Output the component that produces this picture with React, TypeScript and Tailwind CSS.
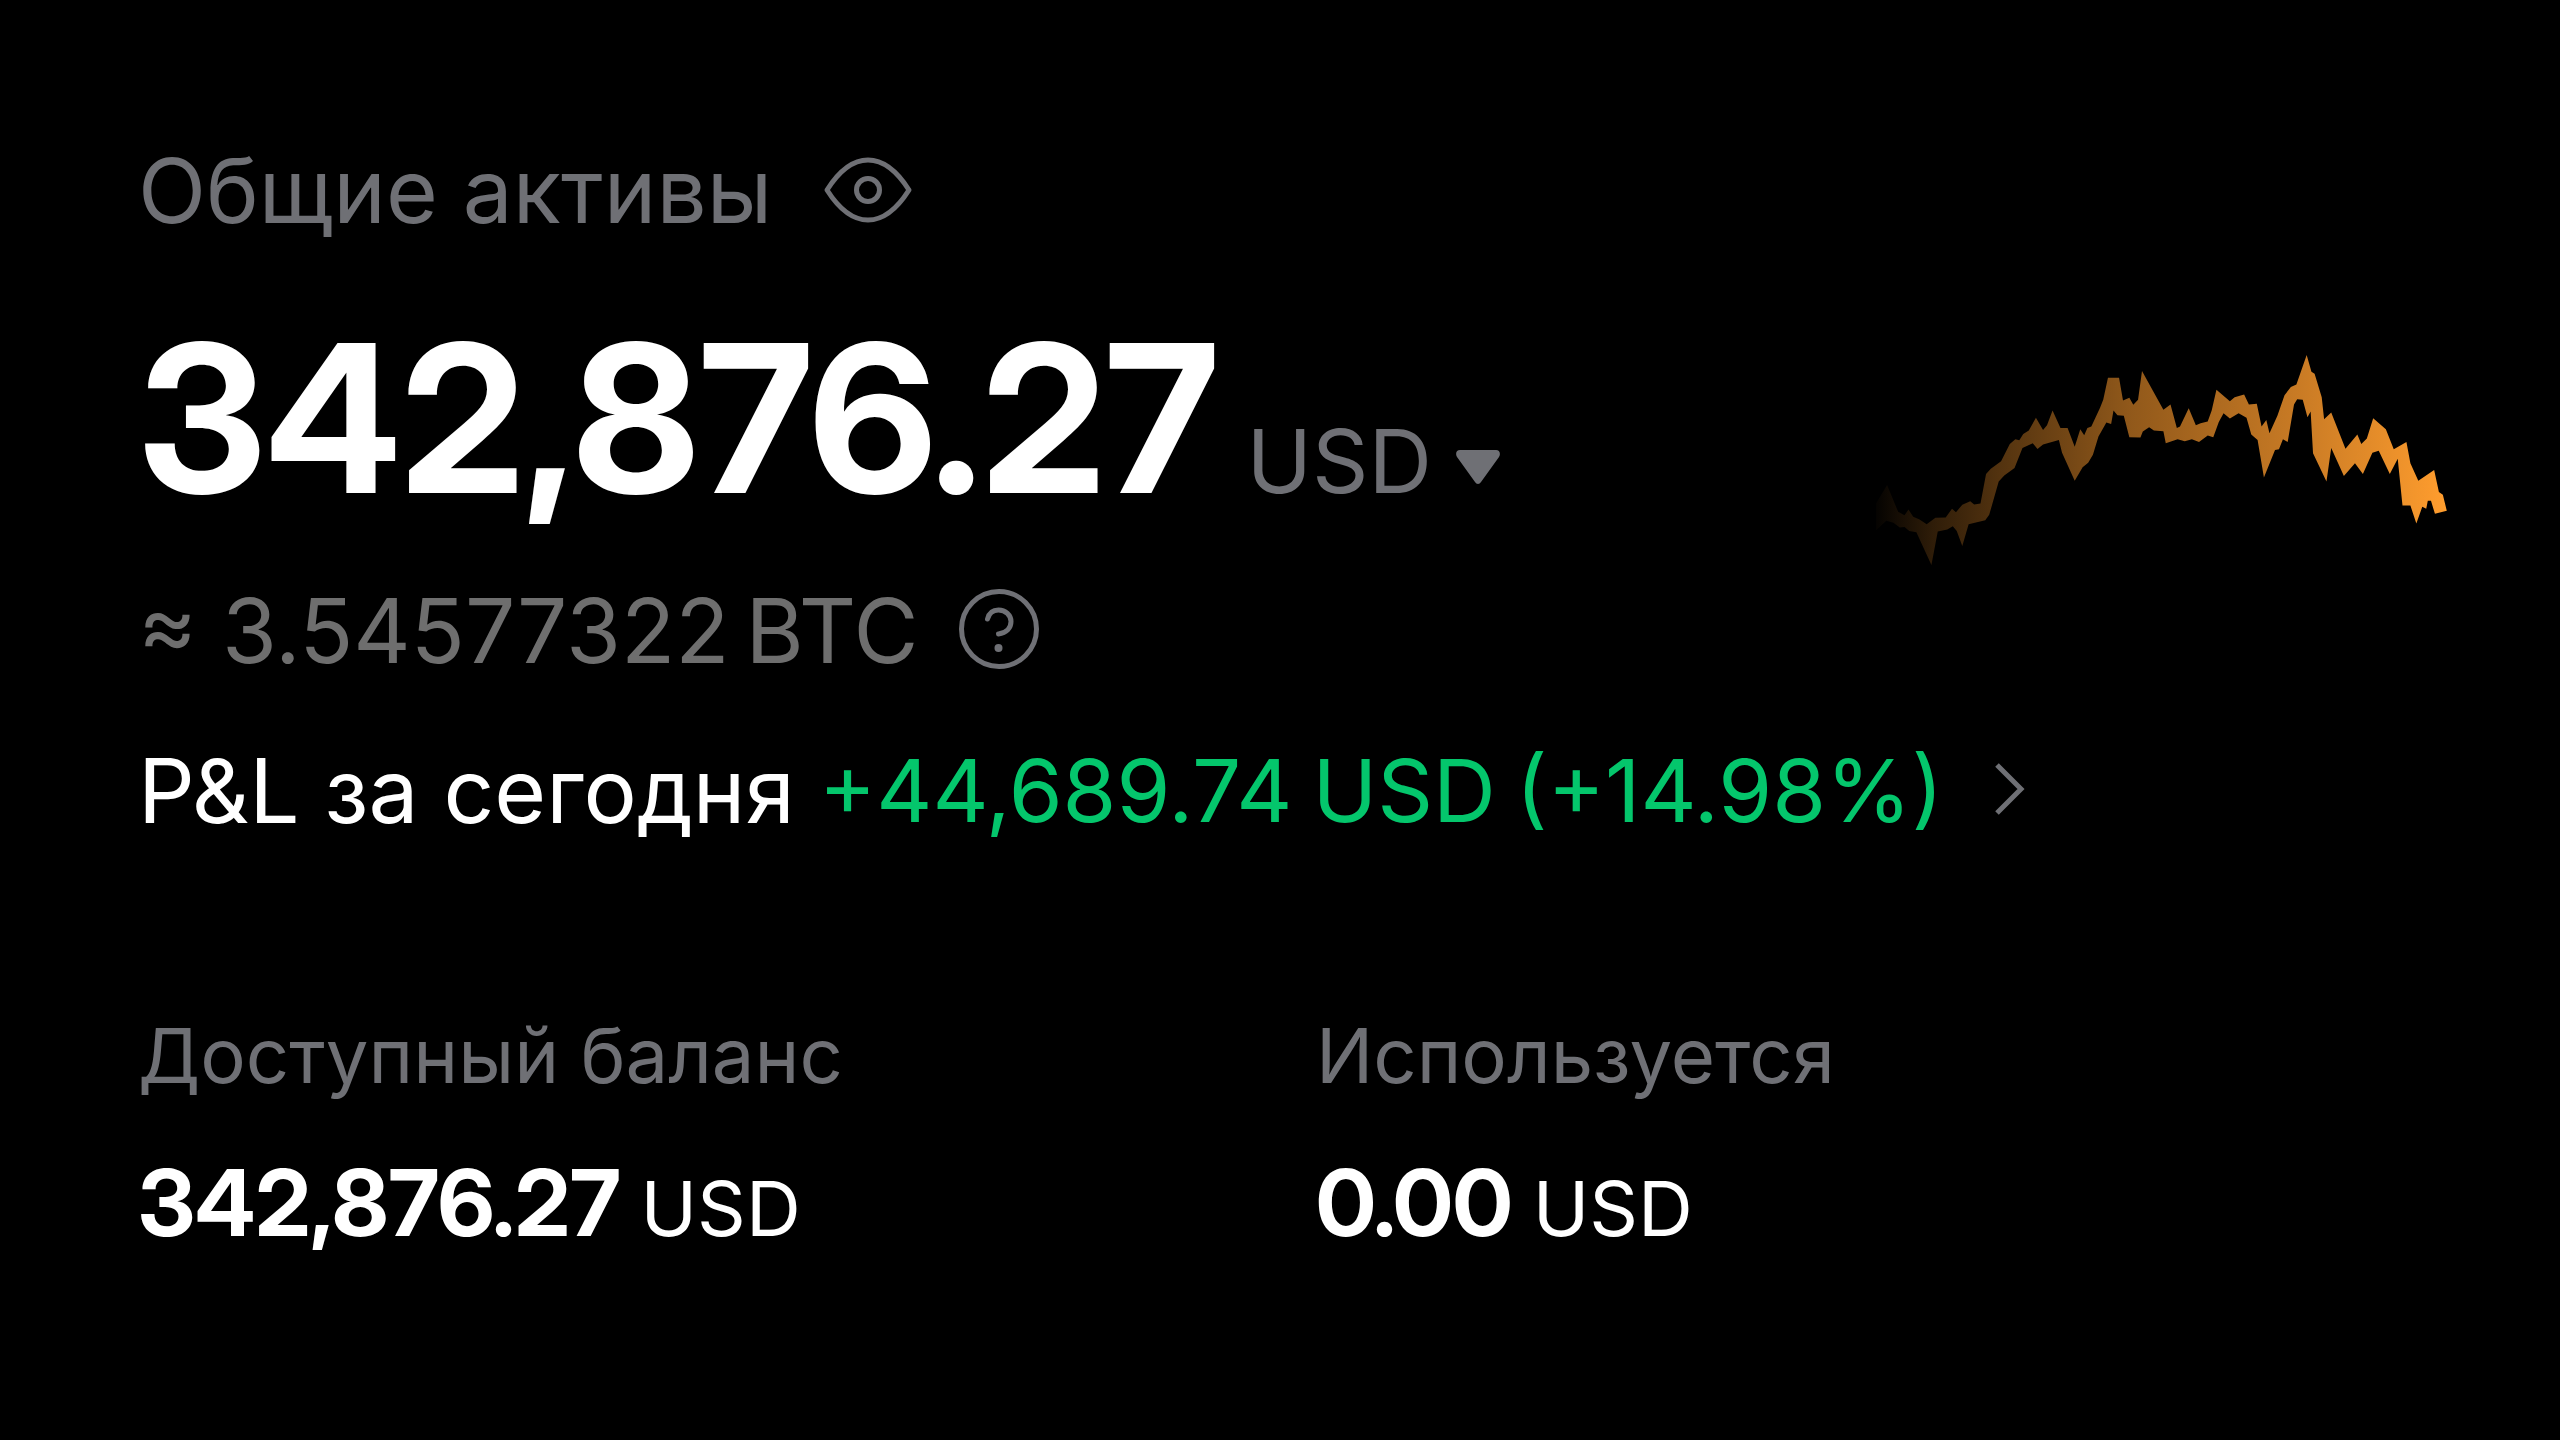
import React from 'react';

const EyeIcon = ({ className }: { className?: string }) => (
    <svg viewBox="0 0 88 66" fill="none" stroke="currentColor" strokeWidth="5" strokeLinejoin="round" className={className} aria-hidden="true">
        <path d="M3 33 C16 12.500 30 3 44 3 C58 3 72 12.500 85 33 C72 53.500 58 63 44 63 C30 63 16 53.500 3 33 Z" />
        <circle cx="44" cy="33" r="11.5" />
    </svg>
);

const HelpIcon = ({ className }: { className?: string }) => (
    <svg viewBox="0 0 80 80" fill="none" stroke="currentColor" strokeWidth="5" strokeLinecap="round" className={className} aria-hidden="true">
        <circle cx="40" cy="40" r="37.5" />
        <path d="M28.500 30 C30 24 34 21 39.500 21 C46.500 21 52 26 52 32.500 C52 39 47.500 44 39.500 45" />
        <circle cx="39.500" cy="59" r="4" fill="currentColor" stroke="none" />
    </svg>
);

const CaretIcon = ({ className }: { className?: string }) => (
    <svg viewBox="0 0 44 34" fill="currentColor" className={className} aria-hidden="true">
        <path d="M4 0 H40 C43.500 0 45 3.500 43 7 L25 32 C23.500 34.500 20.500 34.500 19 32 L1 7 C-1 3.500 0.500 0 4 0 Z" />
    </svg>
);

const ChevronIcon = ({ className }: { className?: string }) => (
    <svg viewBox="0 0 30 52" fill="none" stroke="currentColor" strokeWidth="5" className={className} aria-hidden="true">
        <path d="M2 2 L26 26 L2 50" />
    </svg>
);

const Sparkline = ({ className }: { className?: string }) => (
    <svg viewBox="40 40 1445 640" preserveAspectRatio="none" className={className} role="img" aria-label="График активов">
        <defs>
            <linearGradient id="spark" gradientUnits="userSpaceOnUse" x1="40" y1="0" x2="1480" y2="0">
                <stop offset="0" stopColor="#f7972d" stopOpacity="0.02" />
                <stop offset="0.1" stopColor="#f7972d" stopOpacity="0.19" />
                <stop offset="0.22" stopColor="#f7972d" stopOpacity="0.34" />
                <stop offset="0.45" stopColor="#f7972d" stopOpacity="0.59" />
                <stop offset="0.75" stopColor="#f7972d" stopOpacity="0.82" />
                <stop offset="1" stopColor="#ff9d2e" />
            </linearGradient>
        </defs>
        <path
            fill="url(#spark)"
            d="M40 490 L68 435 L96 515 L112 525 L122 508 L134 530 L150 538 L168 552 L190 533 L216 532 L232 506 L242 516 L258 494 L278 483 L288 493 L304 490 L318 402 L330 386 L356 364 L378 312 L392 298 L402 301 L412 282 L426 272 L444 234 L462 270 L472 256 L486 212 L506 264 L524 264 L542 320 L556 268 L566 286 L574 264 L584 260 L606 204 L614 180 L626 114 L654 114 L664 182 L680 174 L690 195 L702 180 L712 94 L766 210 L784 194 L800 264 L808 260 L830 205 L848 256 L860 250 L878 245 L888 212 L900 150 L934 184 L946 172 L970 164 L982 194 L1002 192 L1014 260 L1026 240 L1034 280 L1054 228 L1072 166 L1088 142 L1102 134 L1128 46 L1140 96 L1148 102 L1166 172 L1172 238 L1190 218 L1226 326 L1256 284 L1266 312 L1280 296 L1296 235 L1328 268 L1348 328 L1380 306 L1390 370 L1410 422 L1450 390 L1462 456 L1472 464 L1482 512 L1452 521 L1442 482 L1434 482 L1430 506 L1420 500 L1405 550 L1390 496 L1370 496 L1358 356 L1338 402 L1310 332 L1294 338 L1270 402 L1250 370 L1222 408 L1190 324 L1178 424 L1144 340 L1138 215 L1130 232 L1118 180 L1104 178 L1096 194 L1080 306 L1068 298 L1058 328 L1048 330 L1020 412 L1004 300 L988 284 L976 234 L956 220 L934 236 L918 220 L906 246 L892 292 L878 287 L856 306 L838 298 L820 304 L802 298 L772 310 L766 274 L742 272 L730 262 L714 275 L708 293 L680 292 L666 228 L650 226 L640 212 L634 252 L622 248 L602 290 L588 344 L576 368 L562 382 L542 422 L510 338 L502 300 L462 314 L448 327 L436 310 L410 324 L390 384 L364 406 L350 424 L326 524 L316 540 L274 552 L258 617 L244 572 L234 558 L220 568 L196 574 L180 674 L142 576 L124 572 L112 560 L100 562 L84 548 L66 542 L40 570 Z"
        />
    </svg>
);

const balances = [
    { label: 'Доступный баланс', value: '342,876.27' },
    { label: 'Используется', value: '0.00' },
];

const App = () => {
    return (
        <main className="min-h-screen bg-black pt-[139px] pl-[138px] pr-[112px] pb-36 font-['Inter',sans-serif] text-white">
            <section className="flex items-end justify-between">
                <div>
                    <div className="flex items-center gap-[52px] text-[#6f7075]">
                        <h1 className="text-[89px] leading-[104px]">Общие активы</h1>
                        <button type="button" aria-label="Скрыть баланс" className="mb-0.5">
                            <EyeIcon className="w-[88px] h-[66px]" />
                        </button>
                    </div>

                    <div className="mt-[71px] flex items-baseline gap-7">
                        <span className="text-[206px] leading-[208px] font-bold font-['Inter_Display','Inter',sans-serif]">342,876.27</span>
                        <button type="button" className="flex items-center gap-6 text-[88px] leading-[104px] text-[#6f7075]">
                            USD
                            <CaretIcon className="w-[44px] h-[34px] mt-3" />
                        </button>
                    </div>

                    <div className="mt-[57px] flex items-center text-[89px] leading-[104px] text-[#6e6e6e]">
                        <span>≈ 3.54577322</span>
                        <span className="ml-4">BTC</span>
                        <button type="button" aria-label="Подробнее" className="ml-10 mb-1 text-[#6f7075]">
                            <HelpIcon className="w-20 h-20" />
                        </button>
                    </div>
                </div>

                <Sparkline className="w-[572px] h-[214px] mb-[116px] shrink-0" />
            </section>

            {/* Today's result */}
            <a href="#" className="mt-14 flex items-center leading-[104px]">
                <span className="text-[89px]">P&amp;L за сегодня</span>
                <span className="ml-6 flex gap-5 text-[87px] text-[#04c66c]">
                    <span>+44,689.74</span>
                    <span>USD</span>
                    <span>(+14.98%)</span>
                </span>
                <ChevronIcon className="ml-[52px] mb-1 w-[30px] h-[52px] text-[#6f7075]" />
            </a>

            <dl className="mt-[166px] grid grid-cols-2 gap-x-[46px]">
                {balances.map(({ label, value }) => (
                    <div key={label}>
                        <dt className="text-[76px] leading-[92px] text-[#6f7075]">{label}</dt>
                        <dd className="mt-12 flex items-baseline gap-5 text-[92px] leading-[108px] font-bold font-['Inter_Display','Inter',sans-serif]">
                            {value}
                            <span className="text-[76px] font-normal font-['Inter',sans-serif]">USD</span>
                        </dd>
                    </div>
                ))}
            </dl>
        </main>
    );
};

export default App;
